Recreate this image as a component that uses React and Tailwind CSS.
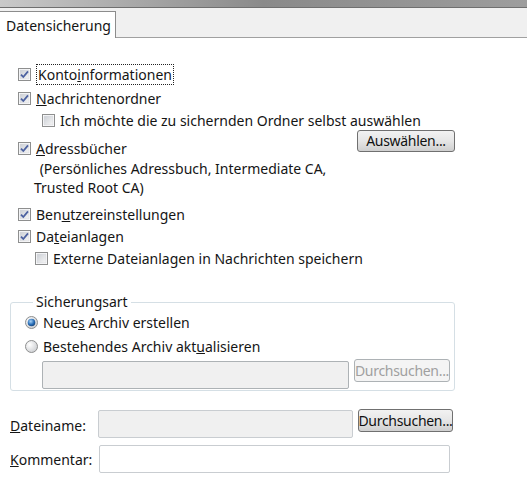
import React from 'react';

const font = { fontFamily: '"Noto Sans", "Open Sans", Arial, sans-serif' };

function CheckBox({ checked }) {
  return (
    <svg width="13" height="13" viewBox="0 0 13 13" className="shrink-0">
      <defs>
        <linearGradient id="cbg" x1="0" y1="0" x2="1" y2="1">
          <stop offset="0" stopColor="#cbcfd5" />
          <stop offset="1" stopColor="#f6f6f6" />
        </linearGradient>
      </defs>
      <rect x="0.5" y="0.5" width="12" height="12" fill="#fff" stroke="#8e8f8f" />
      <rect x="2" y="2" width="9" height="9" fill="url(#cbg)" stroke="#d5d8dc" strokeWidth="0.6" />
      {checked ? (
        <path d="M3 6.6 L5.3 9 L10 3.4" fill="none" stroke="#4c61a0" strokeWidth="1.8" />
      ) : null}
    </svg>
  );
}

function Radio({ checked }) {
  return (
    <svg width="13" height="13" viewBox="0 0 13 13" className="shrink-0">
      <defs>
        <radialGradient id="rbg" cx="0.35" cy="0.35" r="0.8">
          <stop offset="0" stopColor="#ffffff" />
          <stop offset="1" stopColor="#c6c8cc" />
        </radialGradient>
        <radialGradient id="rdot" cx="0.4" cy="0.35" r="0.7">
          <stop offset="0" stopColor="#a9d4f7" />
          <stop offset="0.6" stopColor="#2a6fb8" />
          <stop offset="1" stopColor="#143f74" />
        </radialGradient>
      </defs>
      <circle cx="6.5" cy="6.5" r="6" fill="url(#rbg)" stroke="#8e8f8f" />
      {checked ? <circle cx="6.5" cy="6.5" r="3.8" fill="url(#rdot)" /> : null}
    </svg>
  );
}

function Button({ children, disabled, className = '' }) {
  return (
    <div
      className={`flex items-center justify-center whitespace-nowrap rounded-[3px] border text-[14px] leading-none tracking-[-0.3px] ${
        disabled
          ? 'border-[#adb2b5] bg-[#f4f4f4] text-[#a0a0a0]'
          : 'border-[#707070] bg-gradient-to-b from-[#f2f2f2] via-[#e6e6e6] to-[#cfcfcf] text-[#111]'
      } ${className}`}
    >
      {children}
    </div>
  );
}

function Row({ children, className = '' }) {
  return <div className={`flex h-[22px] items-center gap-[5px] ${className}`}>{children}</div>;
}

export default function App() {
  return (
    <div className="h-[495px] w-[527px] overflow-hidden bg-white text-[14px] text-[#151515]" style={font}>
      <div className="h-[7px] bg-gradient-to-r from-[#c9c9c9] via-[#8a8a8a] to-[#9d9d9d]" />
      <div className="flex h-[31px] border-y border-t-[#6f6f6f] border-b-[#a0a0a0] bg-[#f0f0f0]">
        <div className="-mb-px mt-[3px] flex w-[116px] items-center border-r border-t border-[#8c8c8c] bg-white pl-[6px] pt-[1px]">
          Datensicherung
        </div>
      </div>

      <div className="pl-[18px] pt-[25px]">
        <Row className="gap-[3px]">
          <CheckBox checked />
          <span className="border border-dotted border-[#222] px-px leading-[19px]">
            Konto<u>i</u>nformationen
          </span>
        </Row>
        <Row className="mt-[2px]">
          <CheckBox checked />
          <span>
            <u>N</u>achrichtenordner
          </span>
        </Row>
        <Row className="gap-[4px] pl-[24px]">
          <CheckBox />
          <span>Ich möchte die zu sichernden Ordner selbst auswählen</span>
        </Row>

        <div className="mt-[6px] flex items-start justify-between pr-[72px]">
          <div>
            <Row>
              <CheckBox checked />
              <span>
                <u>A</u>dressbücher
              </span>
            </Row>
            <div className="pl-[18px] leading-[19px]">
              <div>&nbsp;(Persönliches Adressbuch, Intermediate CA,</div>
              <div className="-ml-[2px]">Trusted Root CA)</div>
            </div>
          </div>
          <Button className="-mt-[7px] h-[22px] w-[98px]">Auswählen...</Button>
        </div>

        <Row className="mt-[6px]">
          <CheckBox checked />
          <span>
            Ben<u>u</u>tzereinstellungen
          </span>
        </Row>
        <Row>
          <CheckBox checked />
          <span>
            Da<u>t</u>eianlagen
          </span>
        </Row>
        <Row className="gap-[4px] pl-[17px]">
          <CheckBox />
          <span>Externe Dateianlagen in Nachrichten speichern</span>
        </Row>
      </div>

      <div className="ml-[10px] mt-[24px] w-[445px]">
        <fieldset className="h-[98px] min-w-0 rounded-[3px] border border-[#d5dfe5] pb-0 pl-[14px] pr-[3px]">
          <legend className="ml-[8px] px-[3px] leading-[18px]">Sicherungsart</legend>
          <Row className="gap-[4px]">
            <Radio checked />
            <span>
              Neue<u>s</u> Archiv erstellen
            </span>
          </Row>
          <Row className="mt-[2px] gap-[4px]">
            <Radio />
            <span>
              Bestehendes Archiv akt<u>u</u>alisieren
            </span>
          </Row>
          <div className="mt-[4px] flex items-start gap-[5px] pl-[17px]">
            <div className="h-[28px] w-[307px] shrink-0 rounded-[2px] border border-[#adb2b5] bg-[#f0f0f0]" />
            <Button disabled className="-mt-[2px] h-[23px] w-[96px] shrink-0">
              Durchsuchen...
            </Button>
          </div>
        </fieldset>
      </div>

      <div className="ml-[10px] mt-[19px] flex items-start">
        <div className="flex h-[28px] w-[88px] items-center pt-[2px]">
          <span>
            <u>D</u>ateiname:
          </span>
        </div>
        <div className="h-[28px] w-[255px] rounded-[2px] border border-[#c9cdd1] bg-[#f0f0f0]" />
        <Button className="-mt-[1px] ml-[5px] h-[23px] w-[95px]">Durchsuchen...</Button>
      </div>
      <div className="ml-[10px] mt-[7px] flex items-start">
        <div className="flex h-[28px] w-[89px] items-center">
          <span>
            <u>K</u>ommentar:
          </span>
        </div>
        <div className="h-[28px] w-[351px] rounded-[2px] border border-[#c9cdd1] bg-white" />
      </div>
    </div>
  );
}
